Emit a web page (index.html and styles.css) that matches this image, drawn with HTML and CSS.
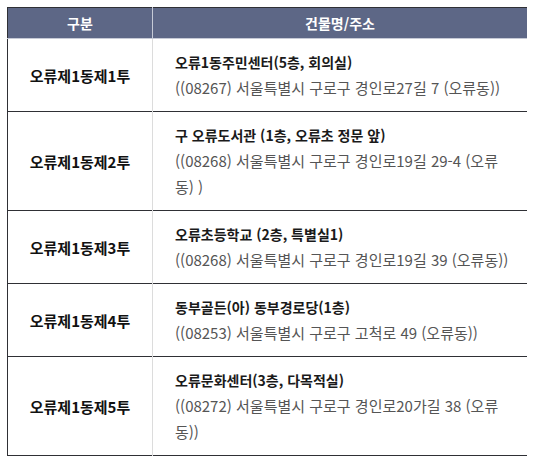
FILE: index.html
```html
<!DOCTYPE html>
<html lang="ko">
<head>
<meta charset="utf-8">
<link rel="stylesheet" href="styles.css">
</head>
<body>
<table class="poll">
  <thead>
    <tr>
      <th class="col-name">구분</th>
      <th class="col-addr">건물명/주소</th>
    </tr>
  </thead>
  <tbody>
    <tr>
      <td class="name">오류제1동제1투</td>
      <td class="addr"><div class="place">오류1동주민센터(5층, 회의실)</div><div class="street">((08267) 서울특별시 구로구 경인로27길 7 (오류동))</div></td>
    </tr>
    <tr>
      <td class="name">오류제1동제2투</td>
      <td class="addr"><div class="place">구 오류도서관 (1층, 오류초 정문 앞)</div><div class="street">((08268) 서울특별시 구로구 경인로19길 29-4 (오류동) )</div></td>
    </tr>
    <tr>
      <td class="name">오류제1동제3투</td>
      <td class="addr"><div class="place">오류초등학교 (2층, 특별실1)</div><div class="street">((08268) 서울특별시 구로구 경인로19길 39 (오류동))</div></td>
    </tr>
    <tr>
      <td class="name">오류제1동제4투</td>
      <td class="addr"><div class="place">동부골든(아) 동부경로당(1층)</div><div class="street">((08253) 서울특별시 구로구 고척로 49 (오류동))</div></td>
    </tr>
    <tr>
      <td class="name">오류제1동제5투</td>
      <td class="addr"><div class="place">오류문화센터(3층, 다목적실)</div><div class="street">((08272) 서울특별시 구로구 경인로20가길 38 (오류동))</div></td>
    </tr>
  </tbody>
</table>
</body>
</html>
```

FILE: styles.css
```css
html, body {
  background: #ffffff;
}
body {
  margin: 7px;
  font-family: "Noto Sans CJK KR", "Noto Sans", sans-serif;
}
.poll {
  width: 521px;
  border-collapse: collapse;
  table-layout: fixed;
  border: 1px solid #2f3035;
}
.poll th {
  background: #5d6786;
  color: #ffffff;
  font-size: 14px;
  font-weight: 700;
  height: 30px;
  padding: 0;
  line-height: 30px;
  text-align: center;
  border-bottom: 1px solid #c6cad6;
}
.col-name {
  width: 144px;
  border-right: 1px solid #c6cad6;
}
.poll td {
  border-top: 1px solid #2f3035;
  vertical-align: middle;
}
.poll tbody tr:first-child td {
  border-top: none;
}
.name {
  border-right: 1px solid #dcdcdc;
  text-align: center;
  font-size: 15px;
  font-weight: 700;
  color: #111111;
  padding: 0;
}
.addr {
  padding: 10px 16px 10px 22px;
  line-height: 26px;
}
.place {
  font-size: 14px;
  font-weight: 700;
  color: #1a1a1a;
}
.street {
  font-size: 15px;
  color: #555555;
}
```
